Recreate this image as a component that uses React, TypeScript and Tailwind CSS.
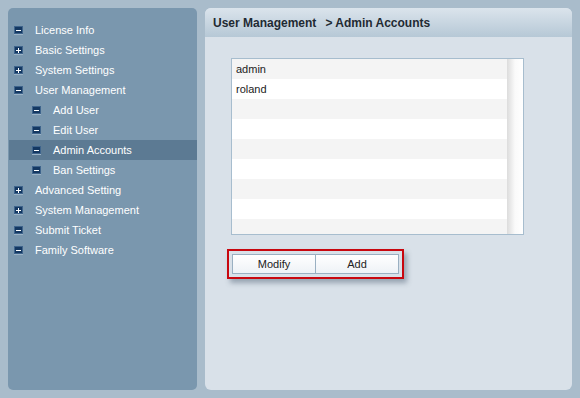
import React from 'react';

// Admin panel – sidebar menu + admin accounts list

type MenuItem = {
  label: string;
  icon: 'plus' | 'minus';
  sub?: boolean;
  active?: boolean;
};

const menu: MenuItem[] = [
  { label: 'License Info', icon: 'minus' },
  { label: 'Basic Settings', icon: 'plus' },
  { label: 'System Settings', icon: 'plus' },
  { label: 'User Management', icon: 'minus' },
  { label: 'Add User', icon: 'minus', sub: true },
  { label: 'Edit User', icon: 'minus', sub: true },
  { label: 'Admin Accounts', icon: 'minus', sub: true, active: true },
  { label: 'Ban Settings', icon: 'minus', sub: true },
  { label: 'Advanced Setting', icon: 'plus' },
  { label: 'System Management', icon: 'plus' },
  { label: 'Submit Ticket', icon: 'minus' },
  { label: 'Family Software', icon: 'minus' },
];

const accounts = ['admin', 'roland', '', '', '', '', '', '', ''];

function TreeIcon({ type }: { type: 'plus' | 'minus' }) {
  return (
    <div className="relative w-[9px] h-[8px] bg-[#143862] border border-[#3e648c] shadow-[0_1px_0_#9cb3c6] flex items-center justify-center">
      <div className="w-[5px] h-[1px] bg-white" />
      {type === 'plus' && <div className="absolute w-[1px] h-[5px] bg-white" />}
    </div>
  );
}

export default function App() {
  return (
    <div
      className="w-[580px] h-[398px] bg-[#a9bccb] flex gap-[8px] p-[8px] overflow-hidden"
      style={{ fontFamily: '"Liberation Sans", Arial, sans-serif' }}
    >
      {/* Sidebar */}
      <div className="w-[189px] h-full bg-[#7a97ae] rounded-[5px] pt-[12px] flex flex-col">
        {menu.map((item) => (
          <div
            key={item.label}
            className={`h-[20px] flex items-center text-[11px] text-white ml-[1px] ${
              item.active ? 'bg-[#5c7a93]' : ''
            } ${item.sub ? 'pl-[23px]' : 'pl-[5px]'}`}
          >
            <TreeIcon type={item.icon} />
            <span className="ml-[12px]">{item.label}</span>
          </div>
        ))}
      </div>

      {/* Main panel */}
      <div className="flex-1 h-full bg-[#d9e1e9] rounded-[6px] flex flex-col overflow-hidden">
        <div className="h-[29px] bg-gradient-to-b from-[#dbe4ec] to-[#b6c8d6] flex items-center pl-[8px] text-[12px] font-bold text-[#1f2a33] whitespace-pre">
          <span>User Management</span>
          <span className="ml-[9px]">&gt; Admin Accounts</span>
        </div>

        <div className="pl-[26px] pt-[21px]">
          <div className="w-[293px] h-[177px] border border-[#a7bdce] bg-white flex overflow-hidden">
            <div className="w-[275px] flex flex-col">
              {accounts.map((name, i) => (
                <div
                  key={i}
                  className={`h-[20px] shrink-0 flex items-center pl-[4px] text-[11px] text-[#222] ${
                    i % 2 === 0 ? 'bg-[#f4f4f4]' : 'bg-white'
                  }`}
                >
                  {name}
                </div>
              ))}
            </div>
            <div className="flex-1 bg-gradient-to-r from-[#dcdcdc] via-[#fafafa] to-white" />
          </div>
        </div>

        <div className="pl-[22px] pt-[14px]">
          <div className="inline-flex border-2 border-[#c8070f] p-[3px] shadow-[3px_4px_5px_rgba(70,90,110,0.45)]">
            {['Modify', 'Add'].map((label) => (
              <button
                key={label}
                className="w-[84px] h-[20px] border border-[#9ab0c2] bg-gradient-to-b from-white to-[#eef2f6] text-[11px] text-[#222] flex items-center justify-center -ml-[1px] first:ml-0"
              >
                {label}
              </button>
            ))}
          </div>
        </div>
      </div>
    </div>
  );
}
